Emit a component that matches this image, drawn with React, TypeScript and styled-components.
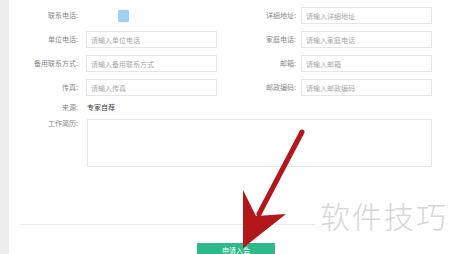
import * as React from 'react'
import styled, { createGlobalStyle } from 'styled-components'

const GlobalStyle = createGlobalStyle`
  html, body {
    margin: 0;
    padding: 0;
    background: #fff;
    overflow: hidden;
  }
  body {
    font-family: "Noto Sans CJK SC", "Noto Sans", sans-serif;
  }
`

const Page = styled.div`
  position: relative;
  display: flex;
  width: 450px;
  height: 254px;
  overflow: hidden;
  background: #fff;
`

const Sidebar = styled.div`
  flex: 0 0 9px;
  background: #ededed;
`

const Main = styled.div`
  flex: 1;
  padding-top: 7px;
`

const FormGrid = styled.div`
  display: grid;
  grid-template-columns: 77px 131px 84px 131px;
  grid-template-rows: repeat(4, 17px) 9px 48px;
  row-gap: 7px;
  font-size: 7px;
`

const Label = styled.div<{ $gap?: number; $top?: boolean }>`
  display: flex;
  align-items: ${p => (p.$top ? 'flex-start' : 'center')};
  justify-content: flex-end;
  padding-right: ${p => p.$gap ?? 8}px;
  color: #8a8a8a;
  white-space: nowrap;
  line-height: 9px;
`

const Input = styled.div`
  box-sizing: border-box;
  height: 17px;
  border: 1px solid #e6e6e6;
  padding-left: 4px;
  display: flex;
  align-items: center;
  color: #a8a8a8;
  white-space: nowrap;
`

const Swatch = styled.div`
  width: 11px;
  height: 12px;
  margin-left: 32px;
  align-self: center;
  background: #a4cff4;
  border-radius: 1px;
`

const Value = styled.div`
  display: flex;
  align-items: center;
  padding-left: 1px;
  color: #444;
  line-height: 9px;
`

const TextArea = styled.div`
  grid-column: 2 / 5;
  box-sizing: border-box;
  margin-left: 1px;
  height: 48px;
  border: 1px solid #e8e8e8;
`

const Divider = styled.div`
  margin: 57px 0 0 11px;
  height: 1px;
  background: #eaeaea;
`

const Footer = styled.div`
  padding: 18px 0 0 188px;
`

const Button = styled.div`
  width: 78px;
  height: 22px;
  background: #2dba8a;
  color: #fff;
  font-size: 7px;
  line-height: 15px;
  text-align: center;
  border-radius: 1px;
`

const Watermark = styled.div`
  position: absolute;
  left: 315px;
  top: 194px;
  padding-left: 5px;
  width: 135px;
  height: 42px;
  background: #fff;
  color: #d6d6d6;
  font-family: "Noto Sans CJK SC", sans-serif;
  font-weight: 300;
  font-size: 30px;
  letter-spacing: 2px;
  line-height: 42px;
  white-space: nowrap;
`

const Overlay = styled.svg`
  position: absolute;
  left: 0;
  top: 0;
  pointer-events: none;
`

const rows: [string, string, string, string][] = [
  ['单位电话:', '请输入单位电话', '家庭电话:', '请输入家庭电话'],
  ['备用联系方式:', '请输入备用联系方式', '邮箱:', '请输入邮箱'],
  ['传真:', '请输入传真', '邮政编码:', '请输入邮政编码'],
]

const Arrow = () => (
  <Overlay width="450" height="254" viewBox="0 0 450 254">
    <line x1="302" y1="132" x2="259" y2="214" stroke="#b3161b" strokeWidth="5" strokeLinecap="round" />
    <polygon points="243,190 256,216 286,214 243,248" fill="#b3161b" />
  </Overlay>
)

export default function App() {
  return (
    <Page>
      <GlobalStyle />
      <Sidebar />
      <Main>
        <FormGrid>
          <Label>联系电话:</Label>
          <Swatch />
          <Label $gap={5}>详细地址:</Label>
          <Input>请输入详细地址</Input>
          {rows.map(r => (
            <React.Fragment key={r[0]}>
              <Label>{r[0]}</Label>
              <Input>{r[1]}</Input>
              <Label $gap={5}>{r[2]}</Label>
              <Input>{r[3]}</Input>
            </React.Fragment>
          ))}
          <Label>来源:</Label>
          <Value>专家自荐</Value>
          <div />
          <div />
          <Label $top>工作简历:</Label>
          <TextArea />
        </FormGrid>
        <Divider />
        <Footer>
          <Button>申请入会</Button>
        </Footer>
      </Main>
      <Watermark>软件技巧</Watermark>
      <Arrow />
    </Page>
  )
}
